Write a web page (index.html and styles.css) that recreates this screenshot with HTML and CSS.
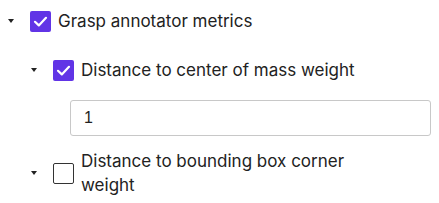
FILE: index.html
```html
<!DOCTYPE html>
<html>
<head>
<meta charset="utf-8">
<link rel="stylesheet" href="styles.css">
</head>
<body>
<div class="tree">
  <div class="node">
    <div class="row">
      <span class="caret"></span>
      <span class="cb checked"><svg viewBox="0 0 21 21" width="21" height="21"><path d="M5 10.8 L8.8 14.4 L16 6.8" fill="none" stroke="#fff" stroke-width="2.2" stroke-linecap="round" stroke-linejoin="round"/></svg></span>
      <span class="label">Grasp annotator metrics</span>
    </div>
    <div class="children">
      <div class="node">
        <div class="row">
          <span class="caret"></span>
          <span class="cb checked"><svg viewBox="0 0 21 21" width="21" height="21"><path d="M5 10.8 L8.8 14.4 L16 6.8" fill="none" stroke="#fff" stroke-width="2.2" stroke-linecap="round" stroke-linejoin="round"/></svg></span>
          <span class="label">Distance to center of mass weight</span>
        </div>
        <div class="field">
          <input class="num" type="text" value="1">
        </div>
      </div>
      <div class="node">
        <div class="row">
          <span class="caret"></span>
          <span class="cb"></span>
          <span class="label wrap">Distance to bounding box corner weight</span>
        </div>
      </div>
    </div>
  </div>
</div>
</body>
</html>
```
FILE: styles.css
```css
html, body {
  margin: 0;
  padding: 0;
  background: #fff;
}
.tree {
  padding: 9px 8px 0 8px;
  font-family: Inter, "Noto Sans", sans-serif;
  font-size: 17px;
  color: #222;
}
.row {
  display: flex;
  align-items: center;
  line-height: 24px;
}
.caret {
  width: 22px;
  flex: none;
  display: flex;
  align-items: center;
}
.caret::before {
  content: "";
  display: block;
  width: 0;
  height: 0;
  border-left: 3.5px solid transparent;
  border-right: 3.5px solid transparent;
  border-top: 4px solid #222;
}
.cb {
  width: 21px;
  height: 21px;
  box-sizing: border-box;
  border: 1.5px solid #333;
  border-radius: 2px;
  flex: none;
  margin-right: 7px;
  display: flex;
}
.cb.checked {
  background: #6134e6;
  border: none;
}
.children {
  padding-left: 23px;
  padding-top: 25px;
}
.field {
  padding: 18px 0 13px 39px;
}
.num {
  display: block;
  box-sizing: border-box;
  width: 361px;
  height: 36px;
  border: 1px solid #c8c8c8;
  border-radius: 3px;
  padding: 0 13px;
  font-family: "Liberation Sans", Arial, sans-serif;
  font-size: 16px;
  color: #222;
  outline: none;
}
.wrap {
  max-width: 290px;
}
```
